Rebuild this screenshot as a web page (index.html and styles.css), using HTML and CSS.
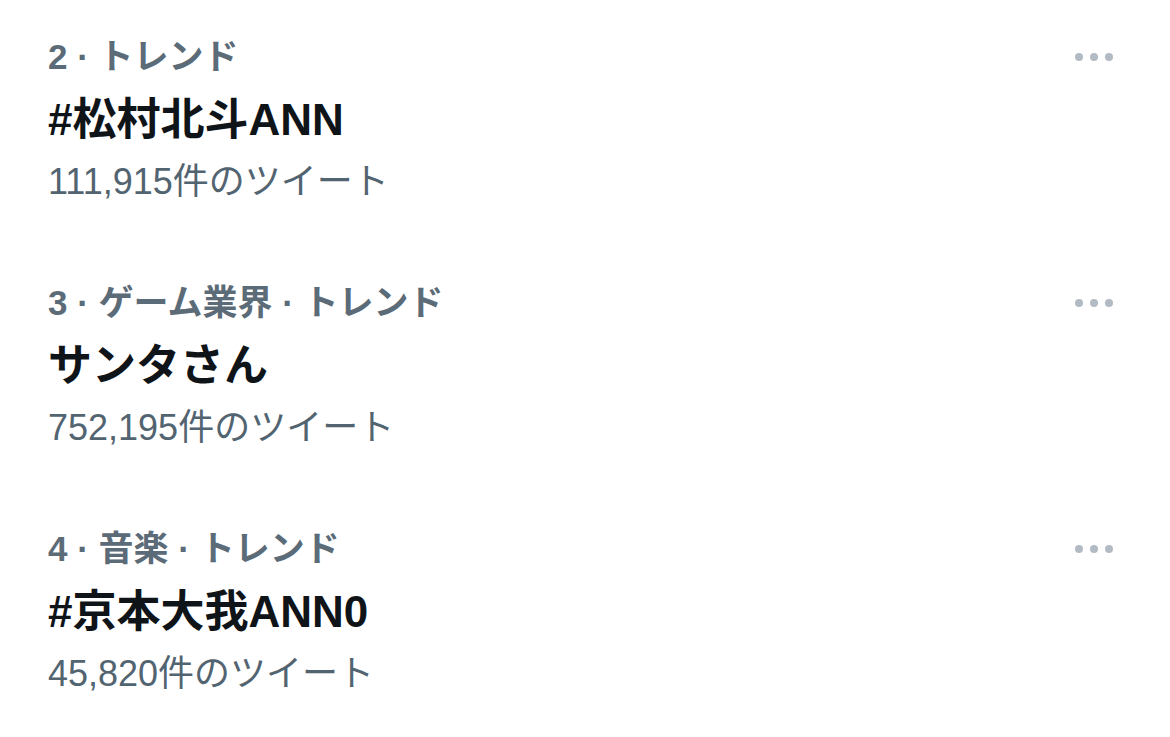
FILE: index.html
```html
<!DOCTYPE html>
<html lang="ja">
<head>
    <meta charset="UTF-8">
    <meta name="viewport" content="width=device-width, initial-scale=1.0">
    <title>トレンド</title>
    <link rel="stylesheet" href="styles.css">
</head>
<body>
    <div class="trends">
        <div class="trend">
            <div class="trend-body">
                <div class="meta">2 · トレンド</div>
                <div class="title">#松村北斗ANN</div>
                <div class="count">111,915件のツイート</div>
            </div>
            <div class="more">
                <svg width="40" height="10" viewBox="0 0 40 10"><circle cx="5" cy="5" r="4"/><circle cx="20" cy="5" r="4"/><circle cx="35" cy="5" r="4"/></svg>
            </div>
        </div>

        <div class="trend">
            <div class="trend-body">
                <div class="meta">3 · ゲーム業界 · トレンド</div>
                <div class="title">サンタさん</div>
                <div class="count">752,195件のツイート</div>
            </div>
            <div class="more">
                <svg width="40" height="10" viewBox="0 0 40 10"><circle cx="5" cy="5" r="4"/><circle cx="20" cy="5" r="4"/><circle cx="35" cy="5" r="4"/></svg>
            </div>
        </div>

        <div class="trend">
            <div class="trend-body">
                <div class="meta">4 · 音楽 · トレンド</div>
                <div class="title">#京本大我ANN0</div>
                <div class="count">45,820件のツイート</div>
            </div>
            <div class="more">
                <svg width="40" height="10" viewBox="0 0 40 10"><circle cx="5" cy="5" r="4"/><circle cx="20" cy="5" r="4"/><circle cx="35" cy="5" r="4"/></svg>
            </div>
        </div>
    </div>
</body>
</html>
```

FILE: styles.css
```css
body {
    margin: 0;
    background: #ffffff;
    font-family: "Liberation Sans", "Noto Sans CJK JP", sans-serif;
}

.trends {
    display: flex;
    flex-direction: column;
}

.trend {
    display: flex;
    justify-content: space-between;
    align-items: flex-start;
    padding: 25px 56px 33px 48px;
}

.meta {
    font-size: 35px;
    line-height: 64px;
    color: #5b6b78;
    font-weight: bold;
}

.title {
    font-size: 44px;
    line-height: 62px;
    color: #0f1419;
    font-weight: bold;
}

.count {
    font-size: 36px;
    line-height: 62px;
    color: #536471;
}

.more {
    height: 64px;
    display: flex;
    align-items: center;
}

.more svg {
    fill: #b2bac3;
}
```
